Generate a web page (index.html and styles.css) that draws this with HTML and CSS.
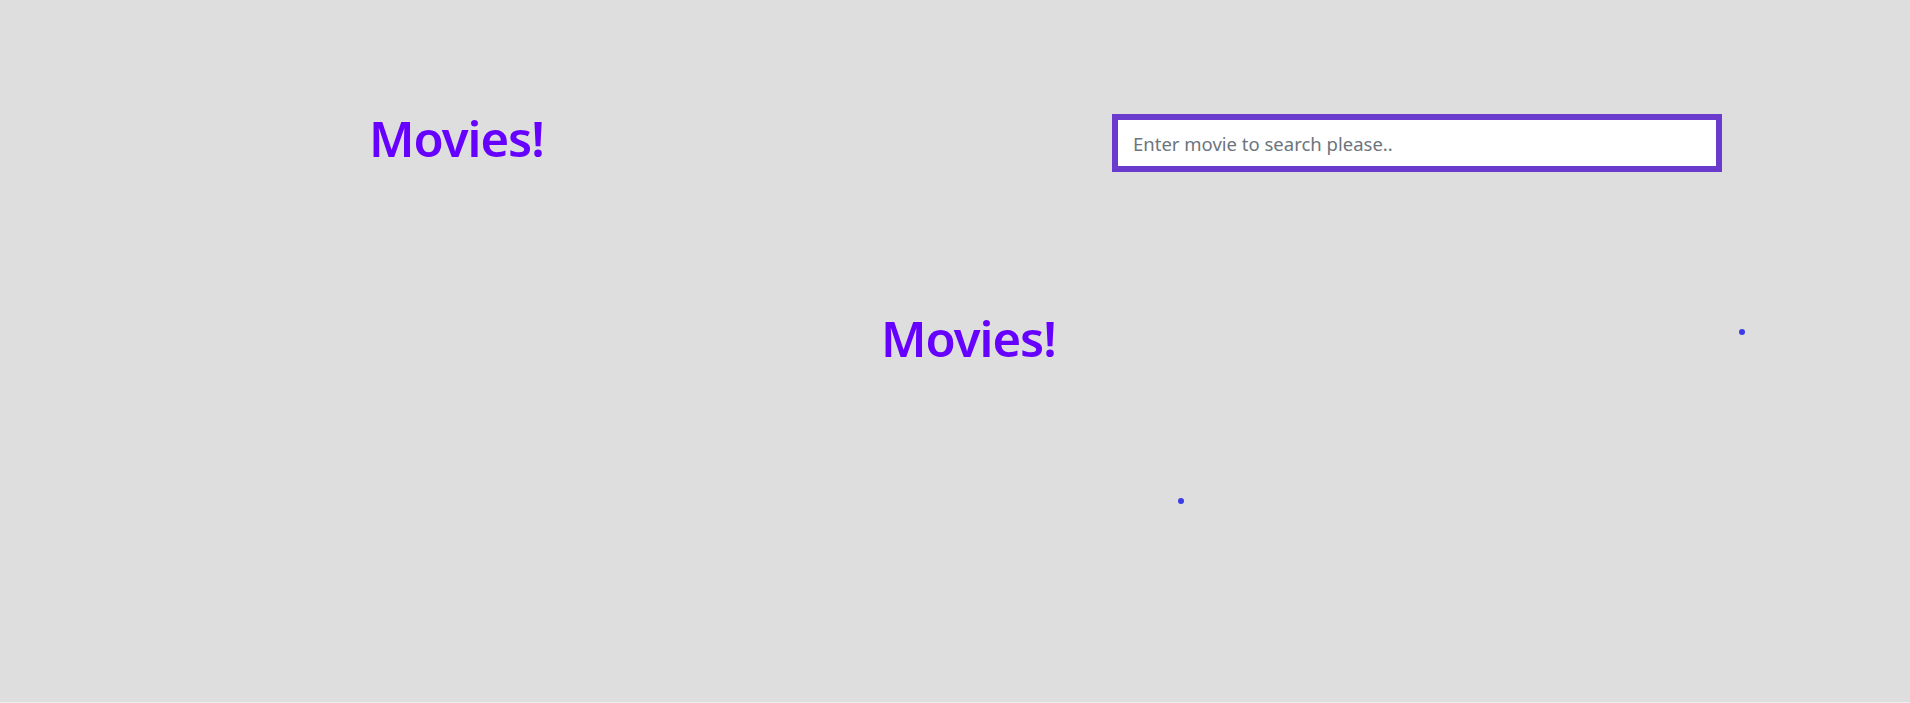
FILE: index.html
```html
<!DOCTYPE html>
<html lang="en">
<head>
<meta charset="utf-8">
<title>Movies!</title>
<link rel="stylesheet" href="styles.css">
</head>
<body>
<div class="page">
  <header class="top-bar">
    <h1 class="brand">Movies!</h1>
    <input class="search" type="text" placeholder="Enter movie to search please..">
  </header>
  <main class="content">
    <h2 class="brand brand-center">Movies!</h2>
    <span class="dot dot-a"></span>
    <span class="dot dot-b"></span>
  </main>
</div>
</body>
</html>
```

FILE: styles.css
```css
html {
  background: #efefef;
}
body {
  margin: 0;
  background: #dedede;
  font-family: "Noto Sans", "Open Sans", sans-serif;
}
.page {
  position: relative;
  height: 702px;
}
.top-bar {
  display: flex;
  justify-content: space-between;
  align-items: flex-start;
  padding: 114px 188px 0 369px;
}
.brand {
  margin: 0;
  font-size: 49px;
  line-height: 1;
  font-weight: 600;
  color: #6600ff;
  letter-spacing: -1px;
}
.search {
  box-sizing: border-box;
  width: 610px;
  height: 58px;
  border: 6px solid #6b3bcd;
  background: #fff;
  padding: 0 15px;
  font-family: "Noto Sans", "Open Sans", sans-serif;
  font-size: 18.5px;
  color: #333;
  outline: none;
}
.search::placeholder {
  color: #6c757d;
}
.content {
  display: flex;
  padding: 142px 0 0 881px;
}
.dot {
  position: absolute;
  width: 6px;
  height: 6px;
  border-radius: 50%;
  background: #3c3ce6;
}
.dot-a {
  left: 1739px;
  top: 329px;
}
.dot-b {
  left: 1178px;
  top: 498px;
}
```
